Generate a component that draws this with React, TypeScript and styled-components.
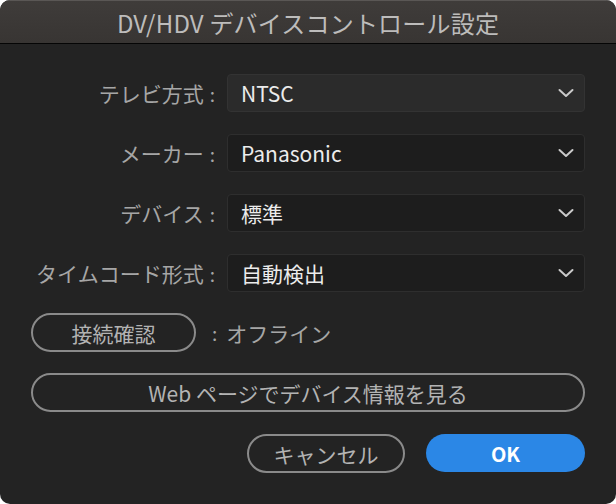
import React from "react";
import styled, { createGlobalStyle } from "styled-components";

const Global = createGlobalStyle`
  html, body { margin: 0; padding: 0; background: #ffffff; }
  body { font-family: "Noto Sans CJK JP", "Noto Sans", sans-serif; }
  * { box-sizing: border-box; }
`;

const Window = styled.div`
  width: 616px;
  height: 504px;
  border-radius: 10px;
  overflow: hidden;
  background: #232323;
  display: flex;
  flex-direction: column;
`;

const TitleBar = styled.div`
  height: 44px;
  flex: none;
  background: linear-gradient(#3f3c3a, #383533);
  border-top: 1px solid #5a5755;
  border-bottom: 1px solid #050505;
  display: flex;
  align-items: center;
  justify-content: center;
  color: #bdbcbb;
  font-size: 24px;
  letter-spacing: 0.2px;
`;

const Body = styled.div`
  padding: 30px 31px 0 31px;
  display: flex;
  flex-direction: column;
`;

const Form = styled.div`
  display: grid;
  grid-template-columns: 184px 1fr;
  column-gap: 12px;
  row-gap: 22px;
`;

const Label = styled.div`
  height: 38px;
  display: flex;
  align-items: center;
  justify-content: flex-end;
  color: #a6a6a6;
  font-size: 21px;
  white-space: nowrap;
`;

const Colon = styled.span`
  margin-left: 6px;
  font-size: 19px;
`;

const Select = styled.div<{ $active?: boolean }>`
  height: 38px;
  border-radius: 4px;
  border: 1.5px solid ${(p) => (p.$active ? "#333333" : "#2e2e2e")};
  background: ${(p) => (p.$active ? "#2b2b2b" : "#1d1d1d")};
  display: flex;
  align-items: center;
  justify-content: space-between;
  padding: 0 10px 0 13px;
  color: #ececec;
  font-size: 21px;
  font-weight: 400;
`;

const Chevron = () => (
  <svg width="16" height="10" viewBox="0 0 16 10">
    <path d="M1.5 2 L8 8 L14.5 2" fill="none" stroke="#c9c9c9" strokeWidth="2" strokeLinecap="round" strokeLinejoin="round" />
  </svg>
);

const StatusRow = styled.div`
  margin-top: 21px;
  display: flex;
  align-items: center;
`;

const OutlineButton = styled.button<{ $width?: string }>`
  height: 39px;
  width: ${(p) => p.$width ?? "auto"};
  border-radius: 20px;
  border: 2px solid #8a8a8a;
  background: transparent;
  color: #b3b3b3;
  font-family: inherit;
  font-size: 21px;
  display: flex;
  align-items: center;
  justify-content: center;
  padding: 0;
`;

const Status = styled.div`
  margin-left: 16px;
  color: #a6a6a6;
  font-size: 21px;
  display: flex;
  align-items: center;
`;

const StatusColon = styled.span`
  font-size: 19px;
  margin-right: 9px;
`;

const WebRow = styled.div`
  margin-top: 21px;
  display: flex;
`;

const Footer = styled.div`
  margin-top: 22px;
  display: flex;
  justify-content: flex-end;
  gap: 21px;
`;

const PrimaryButton = styled.button`
  height: 38px;
  width: 159px;
  border-radius: 20px;
  border: none;
  background: #2b87e6;
  color: #ffffff;
  font-family: inherit;
  font-size: 20px;
  font-weight: 700;
  display: flex;
  align-items: center;
  justify-content: center;
  padding: 0;
`;

const rows: { label: string; value: string; active?: boolean }[] = [
  { label: "テレビ方式", value: "NTSC", active: true },
  { label: "メーカー", value: "Panasonic" },
  { label: "デバイス", value: "標準" },
  { label: "タイムコード形式", value: "自動検出" },
];

export default function App() {
  return (
    <>
      <Global />
      <Window>
        <TitleBar>DV/HDV デバイスコントロール設定</TitleBar>
        <Body>
          <Form>
            {rows.map((r) => (
              <React.Fragment key={r.label}>
                <Label>
                  {r.label}
                  <Colon>:</Colon>
                </Label>
                <Select $active={r.active}>
                  <span>{r.value}</span>
                  <Chevron />
                </Select>
              </React.Fragment>
            ))}
          </Form>
          <StatusRow>
            <OutlineButton $width="165px">接続確認</OutlineButton>
            <Status>
              <StatusColon>:</StatusColon>オフライン
            </Status>
          </StatusRow>
          <WebRow>
            <OutlineButton $width="100%">Web ページでデバイス情報を見る</OutlineButton>
          </WebRow>
          <Footer>
            <OutlineButton $width="158px">キャンセル</OutlineButton>
            <PrimaryButton>OK</PrimaryButton>
          </Footer>
        </Body>
      </Window>
    </>
  );
}
